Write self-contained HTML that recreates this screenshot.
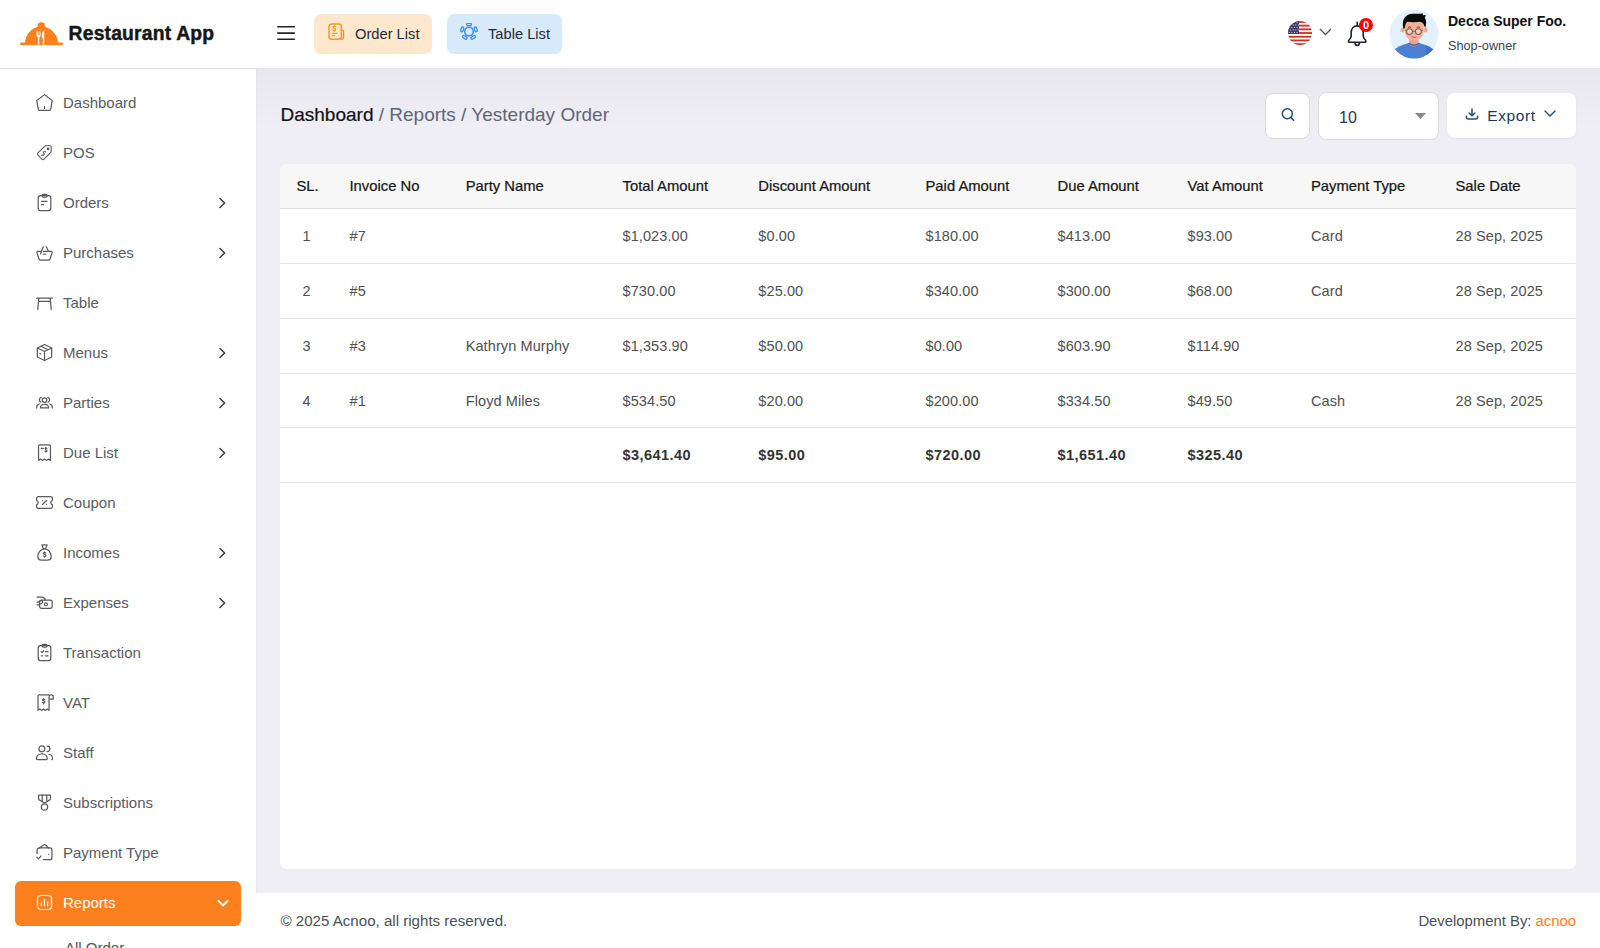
<!DOCTYPE html>
<html>
<head>
<meta charset="utf-8">
<style>
*{box-sizing:border-box;margin:0;padding:0}
html,body{width:1600px;height:948px;overflow:hidden;background:#fff;font-family:"Liberation Sans",sans-serif}
.abs{position:absolute}
#header{position:absolute;left:0;top:0;width:1600px;height:68px;background:#fff}
#sidebar{position:absolute;left:0;top:68px;width:256px;height:880px;background:#fff;border-top:1px solid #dedede}
#main{position:absolute;left:256px;top:68px;width:1344px;height:825px;background:#efeef4}
#mshade{position:absolute;left:0;top:0;width:1344px;height:60px;background:linear-gradient(rgba(0,0,20,0.03),rgba(0,0,20,0))}
#medge{position:absolute;left:0;top:0;width:1px;height:825px;background:rgba(0,0,40,0.018)}
#footer{position:absolute;left:256px;top:893px;width:1344px;height:55px;background:#fff}
.txt{position:absolute;white-space:nowrap;line-height:1}
.nav{position:absolute;left:15px;width:226px;height:44px;border-radius:6px}
.nav svg.ic{position:absolute;left:18.5px;top:10.5px;width:21px;height:21px}
.nav .lb{position:absolute;left:48px;top:14px;font-size:15px;line-height:16px;color:#585c63;white-space:nowrap}
.nav svg.ch{position:absolute;left:203px;top:16px;width:9px;height:12px}
.nav svg.ch path{fill:none;stroke:#3a3a3a;stroke-width:1.5;stroke-linecap:round;stroke-linejoin:round}
.nav svg.chd{position:absolute;left:202px;top:18px;width:12px;height:9px}
.nav svg.chd path{fill:none;stroke:#fff;stroke-width:2;stroke-linecap:round;stroke-linejoin:round}
.nav.active{background:#fc801d;height:44.5px}
.nav.active .lb{color:#fff}
.ic path,.ic rect,.ic circle{fill:none;stroke:#5a5a5a;stroke-width:1.4;stroke-linecap:round;stroke-linejoin:round}
.active .ic path,.active .ic rect,.active .ic circle{stroke:#fff}
.btnw{position:absolute;background:#fff;border-radius:8px}
.th{position:absolute;top:14.5px;font-size:14.8px;line-height:15px;color:#161616;-webkit-text-stroke:0.22px #161616;white-space:nowrap}
.td{position:absolute;font-size:14.5px;line-height:14px;color:#505050;white-space:nowrap;letter-spacing:0.1px}
.td.tb{font-weight:bold;color:#333;letter-spacing:0.45px}
.rowb{position:absolute;left:0;width:1296px;height:1px;background:#e9e9e9}
</style>
</head>
<body>
<div id="header">
  <!-- logo -->
  <svg class="abs" style="left:20px;top:21px" width="44" height="24" viewBox="0 0 44 24">
    <circle cx="21.3" cy="5" r="3.7" fill="#fc801d"/>
    <path d="M5 22.5 C5 13 12.5 5.5 21.3 5.5 C30 5.5 38 13 38 22.5 Z" fill="#fc801d"/>
    <rect x="0" y="21.5" width="43" height="2.5" rx="1.2" fill="#fc801d"/>
    <path d="M16.6 10.5 v4 c0 1 .6 1.6 1.3 1.8 v7.2 h1.4 v-7.2 c.7-.2 1.3-.8 1.3-1.8 v-4 h-.7 v3.6 h-.6 v-3.6 h-.6 v3.6 h-.6 v-3.6 z" fill="#fff"/>
    <path d="M24 9 c-1.4 1.5 -2.2 4 -2.2 7.5 l1 .6 v6.4 h1.4 v-7 v-7.5 z" fill="#fff"/>
  </svg>
  <div class="txt" style="left:68.6px;top:24.2px;font-size:19.3px;font-weight:bold;color:#161616;letter-spacing:0.2px;-webkit-text-stroke:0.45px #161616">Restaurant App</div>
  <!-- hamburger -->
  <svg class="abs" style="left:276px;top:20px" width="20" height="26" viewBox="0 0 20 26"><path d="M1.8 6.75 H18.3 M1.8 13.1 H18.3 M1.8 19.25 H18.3" stroke="#222" stroke-width="1.6" stroke-linecap="round"/></svg>
  <!-- order list -->
  <div class="abs" style="left:314px;top:14px;width:118px;height:40px;background:#fee8cd;border-radius:7px"></div>
  <svg class="abs" style="left:328px;top:23px" width="17" height="17" viewBox="0 0 17 17"><g fill="none" stroke="#f29a2e" stroke-linecap="round" stroke-linejoin="round">
    <rect x="1" y="0.9" width="12.4" height="15.3" rx="2.6" stroke-width="1.5"/>
    <path d="M13.4 7 h.6 a1.5 1.5 0 0 1 1.5 1.5 v5.9 a1.8 1.8 0 0 1 -1.8 1.8 h-.4" stroke-width="1.5"/>
    <path d="M7.6 3.9 c-.3 -.4 -.8 -.6 -1.3 -.6 c-.8 0 -1.3 .4 -1.3 1 c0 1.3 2.7 .8 2.7 2.2 c0 .6 -.6 1 -1.4 1 c-.6 0 -1.1 -.3 -1.4 -.7 M6.3 2.4 v.7 M6.3 7.6 v.7 M4.5 10.3 h4.4 M4.5 12.6 h2.4" stroke-width="1.2"/>
  </g></svg>
  <div class="txt" style="left:355px;top:26.9px;font-size:14.7px;color:#1d2a3a">Order List</div>
  <!-- table list -->
  <div class="abs" style="left:447px;top:14px;width:115px;height:40px;background:#d6eafc;border-radius:7px"></div>
  <svg class="abs" style="left:460px;top:23px" width="18" height="17" viewBox="0 0 18 17"><g fill="none" stroke="#3d8fe8" stroke-width="1.3"><circle cx="9" cy="8.6" r="4.3" stroke-width="1.5"/><rect x="6.60" y="0.30" width="4.8" height="2.4" rx="1.2" transform="rotate(0 9.00 1.50)"/><rect x="13.35" y="5.21" width="4.8" height="2.4" rx="1.2" transform="rotate(72 15.75 6.41)"/><rect x="10.77" y="13.14" width="4.8" height="2.4" rx="1.2" transform="rotate(144 13.17 14.34)"/><rect x="2.43" y="13.14" width="4.8" height="2.4" rx="1.2" transform="rotate(216 4.83 14.34)"/><rect x="-0.15" y="5.21" width="4.8" height="2.4" rx="1.2" transform="rotate(288 2.25 6.41)"/></g></svg>
  <div class="txt" style="left:488px;top:26.9px;font-size:14.7px;color:#1d2a3a">Table List</div>
  <!-- flag -->
  <svg class="abs" style="left:1288px;top:21px" width="24" height="24" viewBox="0 0 24 24">
    <defs><clipPath id="fc"><circle cx="12" cy="12" r="12"/></clipPath></defs>
    <g clip-path="url(#fc)">
      <rect width="24" height="24" fill="#fff"/>
      <rect y="0" width="24" height="1.85" fill="#d22f27"/>
      <rect y="3.7" width="24" height="1.85" fill="#d22f27"/>
      <rect y="7.4" width="24" height="1.85" fill="#d22f27"/>
      <rect y="11.1" width="24" height="1.85" fill="#d22f27"/>
      <rect y="14.8" width="24" height="1.85" fill="#d22f27"/>
      <rect y="18.5" width="24" height="1.85" fill="#d22f27"/>
      <rect y="22.2" width="24" height="1.85" fill="#d22f27"/>
      <rect x="0" y="0" width="11" height="13" fill="#3c3b6e"/><g fill="#fff" opacity="0.85"><circle cx="1.3" cy="1.4" r="0.55"/><circle cx="3.9" cy="1.4" r="0.55"/><circle cx="6.5" cy="1.4" r="0.55"/><circle cx="9.1" cy="1.4" r="0.55"/><circle cx="2.6" cy="3.9" r="0.55"/><circle cx="5.2" cy="3.9" r="0.55"/><circle cx="7.8" cy="3.9" r="0.55"/><circle cx="10.4" cy="3.9" r="0.55"/><circle cx="1.3" cy="6.4" r="0.55"/><circle cx="3.9" cy="6.4" r="0.55"/><circle cx="6.5" cy="6.4" r="0.55"/><circle cx="9.1" cy="6.4" r="0.55"/><circle cx="2.6" cy="8.9" r="0.55"/><circle cx="5.2" cy="8.9" r="0.55"/><circle cx="7.8" cy="8.9" r="0.55"/><circle cx="10.4" cy="8.9" r="0.55"/><circle cx="1.3" cy="11.4" r="0.55"/><circle cx="3.9" cy="11.4" r="0.55"/><circle cx="6.5" cy="11.4" r="0.55"/><circle cx="9.1" cy="11.4" r="0.55"/></g>
    </g>
  </svg>
  <svg class="abs" style="left:1319px;top:28px" width="13" height="8" viewBox="0 0 13 8"><path d="M1 1 L6.5 6.5 L12 1" fill="none" stroke="#555" stroke-width="1.3"/></svg>
  <!-- bell -->
  <svg class="abs" style="left:1346px;top:21px" width="23" height="27" viewBox="0 0 23 27">
    <path d="M11.2 1.3 v3.6 M11.2 4.9 c-3.5 0 -6 2.7 -6 6.4 v3.6 c0 1.6 -.8 2.9 -2.3 4.4 c-.8 .8 -.4 2 .8 2 h15 c1.2 0 1.6 -1.2 .8 -2 c-1.5 -1.5 -2.3 -2.8 -2.3 -4.4 v-3.6 c0 -3.7 -2.5 -6.4 -6 -6.4z M8.9 21.6 c0 1.6 1 2.9 2.3 2.9 s2.3 -1.3 2.3 -2.9" fill="none" stroke="#1b2431" stroke-width="1.6" stroke-linecap="round" stroke-linejoin="round"/>
  </svg>
  <div class="abs" style="left:1359px;top:18px;width:14px;height:14px;border-radius:7px;background:#f00;color:#fff;font-size:11px;font-weight:bold;line-height:14px;text-align:center">0</div>
  <!-- avatar -->
  <svg class="abs" style="left:1389px;top:9px" width="50" height="50" viewBox="0 0 50 50">
    <defs><clipPath id="av"><circle cx="25" cy="25" r="24.5"/></clipPath></defs>
    <circle cx="25" cy="25" r="24.5" fill="#e3f0fd"/>
    <g clip-path="url(#av)">
      <path d="M3 42.5 C7 38.5 13 35.5 20 34 L30 34 C37 35.5 43 38.5 47 42.5 L47 52 L3 52 Z" fill="#4a7fd2"/>
      <path d="M37 36.5 C41 38 44 40 47 42.5 L47 52 L38 52z" fill="#3f6fc4"/>
      <path d="M20.2 27 h9.4 v8.5 c-1.5 2.5 -7.9 2.5 -9.4 0z" fill="#eea58a"/>
      <path d="M19.8 34.2 q5.2 4.2 10.4 0" fill="none" stroke="#3a6cc0" stroke-width="1.5"/>
      <ellipse cx="13.6" cy="21" rx="2.1" ry="2.6" fill="#f1a98e"/>
      <ellipse cx="36.6" cy="21" rx="2.1" ry="2.6" fill="#f1a98e"/>
      <path d="M15.6 17 C15.6 11 19.5 8 25 8 C30.5 8 34.8 11 34.8 17 L34.8 21 C34.8 27 30.5 31.5 25 31.5 C19.5 31.5 15.6 27 15.6 21 Z" fill="#f4b097"/>
      <path d="M14.3 19.5 C12.5 11 16 5 23.5 4.8 C27.5 4.7 31 5.2 33.8 4.3 L34 6.3 L36.8 6 L35.8 8.8 C37.6 11.5 37.5 15 36.2 19 L34.8 15.8 C34 14 32.5 12.8 30.5 12.8 C27 13.4 22 13.5 18.5 12.8 C16.8 14 16 16 15.8 19.5 Z" fill="#0a0a0a"/>
      <circle cx="20.5" cy="22.6" r="2.9" fill="#f7d5c8" stroke="#7a5e52" stroke-width="1.05"/>
      <circle cx="29.4" cy="22.6" r="2.9" fill="#f7d5c8" stroke="#7a5e52" stroke-width="1.05"/>
      <path d="M23.4 22.3 h3.1 M17.6 21.8 l-1.6 -.6 M32.3 21.8 l1.6 -.6" stroke="#7a5e52" stroke-width="0.9"/>
      <path d="M18.8 18.4 q1.6 -.9 3.2 0 M27.8 18.4 q1.6 -.9 3.2 0" fill="none" stroke="#4a3530" stroke-width="0.9"/>
      <path d="M23.2 28 q1.8 .9 3.6 0" fill="none" stroke="#e8608f" stroke-width="1.2" stroke-linecap="round"/>
    </g>
  </svg>
  <div class="txt" style="left:1448px;top:13.6px;font-size:14px;font-weight:bold;color:#111">Decca Super Foo.</div>
  <div class="txt" style="left:1448px;top:40px;font-size:12.7px;color:#3c4450">Shop-owner</div>
</div>

<div id="sidebar">
<div class="nav" style="top:12px"><svg class="ic" viewBox="0 0 24 24"><path d="M3.2 9.8 L12 3 L20.8 9.8 L19 20.2 a1.2 1.2 0 0 1 -1.2 .9 H6.2 a1.2 1.2 0 0 1 -1.2 -.9 Z"/><path d="M12 16.8 v2"/></svg><div class="lb">Dashboard</div></div>
<div class="nav" style="top:62px"><svg class="ic" viewBox="0 0 24 24"><g transform="translate(12 12) scale(0.9) translate(-12 -12)"><path d="M13.6 3.5 H19 a1.5 1.5 0 0 1 1.5 1.5 V10.4 a2 2 0 0 1 -.6 1.4 L11.4 20.3 a2 2 0 0 1 -2.8 0 L3.7 15.4 a2 2 0 0 1 0 -2.8 L12.2 4.1 a2 2 0 0 1 1.4 -.6z"/><circle cx="16.6" cy="7.4" r=".9"/><path d="M13.2 11.2 c-.7-.7-1.9-.6-2.4.1 c-.5.6 -.3 1.4 .4 1.8 c.7.4 .9 1.2 .4 1.8 c-.5.7 -1.7.8 -2.4.1 M13.4 10.9 l-.5.5 M8.4 15.6 l.5-.5"/></g></svg><div class="lb">POS</div></div>
<div class="nav" style="top:112px"><svg class="ic" viewBox="0 0 24 24"><rect x="4.8" y="4.2" width="14.4" height="17" rx="2.6"/><path d="M9 4.2 a1.6 1.6 0 0 1 1.6 -1.6 h2.8 a1.6 1.6 0 0 1 1.6 1.6 a1.6 1.6 0 0 1 -1.6 1.6 h-2.8 a1.6 1.6 0 0 1 -1.6 -1.6z"/><path d="M8.6 10.6 h6.4 M8.6 14.4 h2.4"/></svg><div class="lb">Orders</div><svg class="ch" viewBox="0 0 9 12"><path d="M2 1.5 L6.6 6 L2 10.5"/></svg></div>
<div class="nav" style="top:162px"><svg class="ic" viewBox="0 0 24 24"><path d="M7.8 10.8 H4.2 a1 1 0 0 0 -.9 1.3 L5.6 19.2 a2 2 0 0 0 1.9 1.4 h9 a2 2 0 0 0 1.9 -1.4 L20.7 12.1 a1 1 0 0 0 -.9 -1.3 H10.8"/><path d="M7.5 13.5 L10.6 5.5 M14 5.5 L16.5 10.5"/><path d="M10.6 14 h3"/></svg><div class="lb">Purchases</div><svg class="ch" viewBox="0 0 9 12"><path d="M2 1.5 L6.6 6 L2 10.5"/></svg></div>
<div class="nav" style="top:212px"><svg class="ic" viewBox="0 0 24 24"><path d="M3 7 H21 M5.5 7 L4.3 19.8 M18.5 7 L19.7 19.8 M5.2 10.6 H18.8"/></svg><div class="lb">Table</div></div>
<div class="nav" style="top:262px"><svg class="ic" viewBox="0 0 24 24"><path d="M12 2.8 L20.2 6.8 V17.2 L12 21.2 L3.8 17.2 V6.8 Z"/><path d="M3.8 6.8 L12 10.8 L20.2 6.8 M12 10.8 V21.2 M8 4.8 L16.2 8.8 M6.8 13.2 l1 .5"/></svg><div class="lb">Menus</div><svg class="ch" viewBox="0 0 9 12"><path d="M2 1.5 L6.6 6 L2 10.5"/></svg></div>
<div class="nav" style="top:312px"><svg class="ic" viewBox="0 0 24 24"><circle cx="12" cy="9.2" r="2.6"/><path d="M7.3 18.2 c0 -2.6 2.1 -4.2 4.7 -4.2 s4.7 1.6 4.7 4.2 z"/><path d="M8.2 6.2 a2.9 2.9 0 0 0 -.4 5.4 M15.8 6.2 a2.9 2.9 0 0 1 .4 5.4 M6 13.7 c-2 .6 -3.2 2 -3 4.6 M18 13.7 c2 .6 3.2 2 3 4.6"/></svg><div class="lb">Parties</div><svg class="ch" viewBox="0 0 9 12"><path d="M2 1.5 L6.6 6 L2 10.5"/></svg></div>
<div class="nav" style="top:362px"><svg class="ic" viewBox="0 0 24 24"><path d="M5.2 4.6 a1.4 1.4 0 0 1 1.4 -1.4 h10.8 a1.4 1.4 0 0 1 1.4 1.4 V21 l-2.2 -1.5 l-2.1 1.5 l-2.5 -1.5 l-2.5 1.5 l-2.1 -1.5 L5.2 21 Z"/><path d="M8.3 7.4 h2.4 M14.6 7.4 c-.6 -.6 -1.7 -.5 -1.9 .3 c-.2 .8 .6 1.1 1.1 1.3 c.6 .2 1.1 .6 .9 1.3 c-.2 .8 -1.4 .9 -2 .3 M13.5 6 v.8 M13.5 10.6 v.8"/></svg><div class="lb">Due List</div><svg class="ch" viewBox="0 0 9 12"><path d="M2 1.5 L6.6 6 L2 10.5"/></svg></div>
<div class="nav" style="top:412px"><svg class="ic" viewBox="0 0 24 24"><path d="M3 7.2 a2 2 0 0 1 2 -2 h14 a2 2 0 0 1 2 2 v2.4 a2.5 2.5 0 0 0 0 4.8 v2.4 a2 2 0 0 1 -2 2 H5 a2 2 0 0 1 -2 -2 v-2.4 a2.5 2.5 0 0 0 0 -4.8 z"/><path d="M9.6 14.2 l4.8 -4.4 M9.8 10 h.3 M14 14 h.3"/></svg><div class="lb">Coupon</div></div>
<div class="nav" style="top:462px"><svg class="ic" viewBox="0 0 24 24"><path d="M12 7.8 c-4.6 0 -7.6 4.8 -7.6 8.8 c0 2.4 1.8 4.2 4.2 4.2 h6.8 c2.4 0 4.2 -1.8 4.2 -4.2 C19.6 12.6 16.6 7.8 12 7.8z"/><path d="M9 3.2 l1.6 4.4 h2.8 l1.6 -4.4 c-.8 .5 -1.4 .7 -2 .2 c-.6 -.5 -1.4 -.5 -2 0 c-.6 .5 -1.2 .3 -2 -.2z"/><path d="M13.6 12.6 c-.6 -.7 -2.6 -.8 -2.8 .4 c-.2 1.2 2.8 1 2.8 2.4 c0 1.2 -2.2 1.2 -3 .4 M12 11.4 v.8 M12 16.6 v.8"/></svg><div class="lb">Incomes</div><svg class="ch" viewBox="0 0 9 12"><path d="M2 1.5 L6.6 6 L2 10.5"/></svg></div>
<div class="nav" style="top:512px"><svg class="ic" viewBox="0 0 24 24"><rect x="6.4" y="9.4" width="14.4" height="9.2" rx="2.2"/><circle cx="13.6" cy="14" r="1.7"/><path d="M3.4 5.8 h6.2 c1.2 0 2 .8 3 2.4 l.7 1.2 M3.8 11.8 l3.8 -1.8 c1 -.4 1.9 0 2.3 .8 c.3 .7 0 1.4 -.6 1.8 l-2 1.2 M3.4 14.6 h2.6"/></svg><div class="lb">Expenses</div><svg class="ch" viewBox="0 0 9 12"><path d="M2 1.5 L6.6 6 L2 10.5"/></svg></div>
<div class="nav" style="top:562px"><svg class="ic" viewBox="0 0 24 24"><rect x="4.8" y="4.2" width="14.4" height="17" rx="2.6"/><path d="M9 4.2 a1.6 1.6 0 0 1 1.6 -1.6 h2.8 a1.6 1.6 0 0 1 1.6 1.6 a1.6 1.6 0 0 1 -1.6 1.6 h-2.8 a1.6 1.6 0 0 1 -1.6 -1.6z"/><path d="M8.2 11 l1.1 1 l1.8 -2 M13 11 h3 M8.3 15.8 h1.5 M13 15.8 h3"/></svg><div class="lb">Transaction</div></div>
<div class="nav" style="top:612px"><svg class="ic" viewBox="0 0 24 24"><path d="M16.8 3.2 H6 a1.4 1.4 0 0 0 -1.4 1.4 V21 l2.1 -1.5 l2.1 1.5 l2.2 -1.5 l2.2 1.5 l2.1 -1.5 l1.9 1.5 V5.6 a2.4 2.4 0 0 1 4.8 0 v2.6 h-4.8"/><path d="M12.4 8.8 c-.6 -.7 -2.4 -.8 -2.6 .3 c-.2 1.1 2.6 1 2.6 2.3 c0 1.1 -2 1.1 -2.8 .4 M11 7.6 v.8 M11 12.6 v.8"/></svg><div class="lb">VAT</div></div>
<div class="nav" style="top:662px"><svg class="ic" viewBox="0 0 24 24"><circle cx="9" cy="7.8" r="3.4"/><path d="M2.8 19.2 c0 -3.2 2.6 -5.6 6.2 -5.6 s6.2 2.4 6.2 5.6 a1 1 0 0 1 -1 1 H3.8 a1 1 0 0 1 -1 -1z"/><path d="M15 4.6 a3.2 3.2 0 0 1 0 6.4 M17.2 14 c2.4 .6 4 2.6 4 5.2 a1 1 0 0 1 -1 1"/></svg><div class="lb">Staff</div></div>
<div class="nav" style="top:712px"><svg class="ic" viewBox="0 0 24 24"><path d="M5.2 3.6 h13.6 v4 a1.6 1.6 0 0 1 -.8 1.4 L12 12.6 L6 9 a1.6 1.6 0 0 1 -.8 -1.4 z"/><path d="M9.4 3.6 v6.8 M14.6 3.6 v6.8"/><circle cx="12" cy="17.2" r="3.6"/></svg><div class="lb">Subscriptions</div></div>
<div class="nav" style="top:762px"><svg class="ic" viewBox="0 0 24 24"><path d="M3.5 13 V10 c0 -2 1.2 -3.2 3.2 -3.2 h11.6 a2.2 2.2 0 0 1 2.2 2.2 v9 a2.2 2.2 0 0 1 -2.2 2.2 H11"/><path d="M6 6.8 L11 3.4 a2 2 0 0 1 2.3 .1 L16.8 6.8"/><path d="M16.6 14 h.3"/><path d="M3.2 17.4 l1.8 1.8 l3.2 -3.4"/></svg><div class="lb">Payment Type</div></div>
<div class="nav active" style="top:812px"><svg class="ic" viewBox="0 0 24 24"><rect x="4" y="4" width="16" height="16" rx="3.8"/><path d="M8.4 15.8 v-3.4 M12 15.8 v-7.6 M15.6 15.8 v-4.6"/></svg><div class="lb">Reports</div><svg class="chd" viewBox="0 0 12 8"><path d="M1.4 1.4 L6 6 L10.6 1.4"/></svg></div>
<div class="txt" style="left:65px;top:871px;font-size:15px;color:#4d5461">All Order</div>
</div>

<div id="main">
<div id="mshade"></div><div id="medge"></div>
  <div class="txt" style="left:24.5px;top:37px;font-size:19px;color:#5d6775"><span style="color:#111;-webkit-text-stroke:0.2px #111">Dashboard</span> / Reports / Yesterday Order</div>
  <!-- search -->
  <div class="btnw" style="left:1009px;top:25px;width:45px;height:46px;border:1px solid #d9d9de"></div>
  <svg class="abs" style="left:1023.5px;top:38px" width="16" height="16" viewBox="0 0 16 16"><circle cx="7.3" cy="7.8" r="5" fill="none" stroke="#234e6e" stroke-width="1.5"/><path d="M11 11.6 L13.6 14.2" stroke="#234e6e" stroke-width="1.6" stroke-linecap="round"/></svg>
  <!-- select -->
  <div class="btnw" style="left:1062px;top:23.5px;width:120.5px;height:48px;border:1px solid #d9d9de"></div>
  <div class="txt" style="left:1083px;top:41.5px;font-size:16px;color:#1c3a58">10</div>
  <svg class="abs" style="left:1159px;top:45px" width="11" height="6" viewBox="0 0 11 6"><path d="M0 0 H11 L5.5 6z" fill="#888"/></svg>
  <!-- export -->
  <div class="btnw" style="left:1191px;top:25px;width:129px;height:45px;box-shadow:0 1px 2px rgba(0,0,0,0.06)"></div>
  <svg class="abs" style="left:1209px;top:39px" width="14" height="14" viewBox="0 0 14 14"><path d="M7 2 V8.6 M4.2 6 L7 8.8 L9.8 6 M1.5 9.2 V10.6 a1.4 1.4 0 0 0 1.4 1.4 H11.1 a1.4 1.4 0 0 0 1.4 -1.4 V9.2" fill="none" stroke="#234e6e" stroke-width="1.5" stroke-linecap="round" stroke-linejoin="round"/></svg>
  <div class="txt" style="left:1231.3px;top:40px;font-size:15.5px;letter-spacing:0.6px;color:#1c3a52">Export</div>
  <svg class="abs" style="left:1288px;top:42px" width="12" height="7" viewBox="0 0 12 7"><path d="M1 1 L6 6 L11 1" fill="none" stroke="#234e6e" stroke-width="1.4" stroke-linecap="round" stroke-linejoin="round"/></svg>
  <!-- card -->
  <div id="card" style="position:absolute;left:24px;top:96px;width:1296px;height:705px;background:#fff;border-radius:7px;overflow:hidden">
    <div style="position:absolute;left:0;top:0;width:1296px;height:44px;background:#f7f7f7;border-bottom:1px solid #dddddd;height:45px"></div>
    <div class="th" style="left:16.5px">SL.</div>
    <div class="th" style="left:69.5px">Invoice No</div>
    <div class="th" style="left:185.7px">Party Name</div>
    <div class="th" style="left:342.5px">Total Amount</div>
    <div class="th" style="left:478.3px">Discount Amount</div>
    <div class="th" style="left:645.5px">Paid Amount</div>
    <div class="th" style="left:777.5px">Due Amount</div>
    <div class="th" style="left:907.5px">Vat Amount</div>
    <div class="th" style="left:1031px">Payment Type</div>
    <div class="th" style="left:1175.5px">Sale Date</div>
    <div class="rowb" style="top:99px"></div>
    <div class="td" style="left:16.5px;width:20px;text-align:center;top:65px">1</div>
    <div class="td" style="left:69.5px;top:65px">#7</div>
    <div class="td" style="left:342.5px;top:65px">$1,023.00</div>
    <div class="td" style="left:478.3px;top:65px">$0.00</div>
    <div class="td" style="left:645.5px;top:65px">$180.00</div>
    <div class="td" style="left:777.5px;top:65px">$413.00</div>
    <div class="td" style="left:907.5px;top:65px">$93.00</div>
    <div class="td" style="left:1031px;top:65px">Card</div>
    <div class="td" style="left:1175.5px;top:65px">28 Sep, 2025</div>
    <div class="rowb" style="top:154px"></div>
    <div class="td" style="left:16.5px;width:20px;text-align:center;top:120px">2</div>
    <div class="td" style="left:69.5px;top:120px">#5</div>
    <div class="td" style="left:342.5px;top:120px">$730.00</div>
    <div class="td" style="left:478.3px;top:120px">$25.00</div>
    <div class="td" style="left:645.5px;top:120px">$340.00</div>
    <div class="td" style="left:777.5px;top:120px">$300.00</div>
    <div class="td" style="left:907.5px;top:120px">$68.00</div>
    <div class="td" style="left:1031px;top:120px">Card</div>
    <div class="td" style="left:1175.5px;top:120px">28 Sep, 2025</div>
    <div class="rowb" style="top:209px"></div>
    <div class="td" style="left:16.5px;width:20px;text-align:center;top:175px">3</div>
    <div class="td" style="left:69.5px;top:175px">#3</div>
    <div class="td" style="left:185.7px;top:175px">Kathryn Murphy</div>
    <div class="td" style="left:342.5px;top:175px">$1,353.90</div>
    <div class="td" style="left:478.3px;top:175px">$50.00</div>
    <div class="td" style="left:645.5px;top:175px">$0.00</div>
    <div class="td" style="left:777.5px;top:175px">$603.90</div>
    <div class="td" style="left:907.5px;top:175px">$114.90</div>
    <div class="td" style="left:1175.5px;top:175px">28 Sep, 2025</div>
    <div class="rowb" style="top:263px"></div>
    <div class="td" style="left:16.5px;width:20px;text-align:center;top:230px">4</div>
    <div class="td" style="left:69.5px;top:230px">#1</div>
    <div class="td" style="left:185.7px;top:230px">Floyd Miles</div>
    <div class="td" style="left:342.5px;top:230px">$534.50</div>
    <div class="td" style="left:478.3px;top:230px">$20.00</div>
    <div class="td" style="left:645.5px;top:230px">$200.00</div>
    <div class="td" style="left:777.5px;top:230px">$334.50</div>
    <div class="td" style="left:907.5px;top:230px">$49.50</div>
    <div class="td" style="left:1031px;top:230px">Cash</div>
    <div class="td" style="left:1175.5px;top:230px">28 Sep, 2025</div>
    <div class="rowb" style="top:318px"></div>
    <div class="td tb" style="left:342.5px;top:284px">$3,641.40</div>
    <div class="td tb" style="left:478.3px;top:284px">$95.00</div>
    <div class="td tb" style="left:645.5px;top:284px">$720.00</div>
    <div class="td tb" style="left:777.5px;top:284px">$1,651.40</div>
    <div class="td tb" style="left:907.5px;top:284px">$325.40</div>
  </div>

</div>

<div id="footer">
  <div class="txt" style="left:24.5px;top:20px;font-size:15.1px;color:#4a4f57">© 2025 Acnoo, all rights reserved.</div>
  <div class="txt" style="right:24px;top:20.5px;font-size:14.85px;color:#4a4f57">Development By: <span style="color:#fc801d">acnoo</span></div>
</div>
</body>
</html>
